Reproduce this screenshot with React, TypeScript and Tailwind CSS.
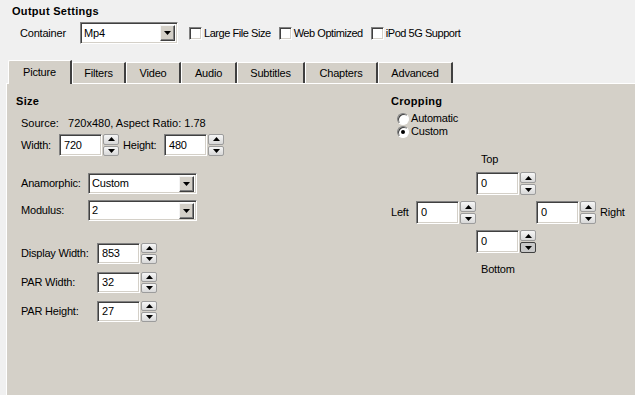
import React from 'react';

const sunken =
    'bg-white border border-t-[#808080] border-l-[#808080] border-b-white border-r-white shadow-[inset_1px_1px_0_#404040,inset_-1px_-1px_0_#d4d0c8]';
const raised =
    'bg-[#d4d0c8] border border-t-[#f4f4f4] border-l-[#f4f4f4] border-r-[#404040] border-b-[#404040] shadow-[inset_-1px_-1px_0_#808080]';

const Arrow: React.FC<{ down?: boolean }> = ({ down }) => (
    <svg width="7" height="4" viewBox="0 0 7 4">
        <path d={down ? 'M0 0h7L3.5 4z' : 'M0 4h7L3.5 0z'} fill="#000" />
    </svg>
);

const Field: React.FC<{ value: string; w?: string; h?: string }> = ({ value, w = 'w-[43px]', h = 'h-[22px]' }) => (
    <div className={`${w} ${h} ${sunken} flex items-center pl-[4px]`}>{value}</div>
);

const Spin: React.FC<{ h?: string; pressed?: boolean }> = ({ h = 'h-[22px]', pressed }) => (
    <div className={`flex flex-col gap-px w-[16px] ${h}`}>
        <div className="flex-1 rounded-[2px] border border-[#9c9c9c] bg-linear-to-b from-[#f6f6f6] to-[#d8d8d8] flex items-center justify-center">
            <Arrow />
        </div>
        <div
            className={`flex-1 rounded-[2px] border flex items-center justify-center ${
                pressed ? 'border-[#404040] bg-[#c8c8c8]' : 'border-[#9c9c9c] bg-linear-to-b from-[#f6f6f6] to-[#d8d8d8]'
            }`}
        >
            <Arrow down />
        </div>
    </div>
);

const SpinField: React.FC<{ value: string; h?: string; pressed?: boolean }> = ({ value, h = 'h-[22px]', pressed }) => (
    <div className="flex gap-px">
        <Field value={value} h={h} />
        <Spin h={h} pressed={pressed} />
    </div>
);

const Combo: React.FC<{ value: string; w: string; h?: string }> = ({ value, w, h = 'h-[22px]' }) => (
    <div className={`${w} ${h} ${sunken} flex items-center pr-[2px]`}>
        <span className="flex-1 pl-[3px]">{value}</span>
        <div className={`w-[15px] h-[16px] ${raised} flex items-center justify-center`}>
            <Arrow down />
        </div>
    </div>
);

const Check: React.FC<{ label: string }> = ({ label }) => (
    <div className="flex items-center gap-[2px]">
        <div className={`w-[13px] h-[13px] ${sunken}`} />
        <span className="tracking-[-0.45px]">{label}</span>
    </div>
);

const Radio: React.FC<{ label: string; checked?: boolean }> = ({ label, checked }) => (
    <div className="flex items-center gap-[2px] h-[13px]">
        <div className="w-[12px] h-[12px] rounded-full bg-white border border-t-[#808080] border-l-[#808080] border-b-white border-r-white shadow-[inset_1px_1px_0_#404040] flex items-center justify-center">
            {checked && <div className="w-[4px] h-[4px] rounded-full bg-black" />}
        </div>
        <span>{label}</span>
    </div>
);

const tabs = ['Picture', 'Filters', 'Video', 'Audio', 'Subtitles', 'Chapters', 'Advanced'];
const tabWidths = ['w-[64px]', 'w-[54px]', 'w-[55px]', 'w-[56px]', 'w-[68px]', 'w-[73px]', 'w-[75px]'];

const App: React.FC = () => {
    return (
        <div className="w-[635px] h-[395px] overflow-hidden bg-[#f0f0f0] text-black text-[11px] leading-[13px] tracking-[-0.2px] font-['Tahoma','Liberation_Sans',sans-serif] flex flex-col">
            <div className="pt-[5px] pl-[12px] font-bold tracking-[0.3px]">Output Settings</div>
            <div className="mt-[4px] pl-[20px] flex items-center h-[22px]">
                <span className="w-[60px]">Container</span>
                <Combo value="Mp4" w="w-[98px]" />
                <div className="ml-[11px] flex items-center gap-[8px]">
                    <Check label="Large File Size" />
                    <Check label="Web Optimized" />
                    <Check label="iPod 5G Support" />
                </div>
            </div>

            <div className="mt-[16px] pl-[8px] flex items-end h-[24px] relative z-10">
                {tabs.map((t, i) =>
                    i === 0 ? (
                        <div
                            key={t}
                            className={`${tabWidths[i]} h-[24px] bg-[#d4d0c8] border-t border-l border-[#ffffff] border-r-2 border-r-[#404040] rounded-tl-[2px] flex items-center justify-center pb-[1px]`}
                        >
                            {t}
                        </div>
                    ) : (
                        <div
                            key={t}
                            className={`${tabWidths[i]} h-[21px] mb-px bg-[#d4d0c8] border-t border-l border-[#ffffff] border-r-2 border-r-[#404040] flex items-center justify-center`}
                        >
                            {t}
                        </div>
                    )
                )}
            </div>

            <div className="flex-1 ml-[6px] -mt-px bg-[#d4d0c8] border-t border-l border-white flex pt-[11px]">
                <div className="w-[384px] pl-[9px] flex flex-col">
                    <div className="font-bold tracking-[0.3px]">Size</div>
                    <div className="mt-[9px] pl-[5px] tracking-normal">Source:&nbsp;&nbsp; 720x480, Aspect Ratio: 1.78</div>
                    <div className="mt-[4px] pl-[5px] flex items-center">
                        <span className="w-[38px]">Width:</span>
                        <SpinField value="720" />
                        <span className="ml-[4px] w-[41px]">Height:</span>
                        <SpinField value="480" />
                    </div>
                    <div className="mt-[17px] pl-[5px] flex items-center">
                        <span className="w-[67px]">Anamorphic:</span>
                        <Combo value="Custom" w="w-[109px]" h="h-[21px]" />
                    </div>
                    <div className="mt-[6px] pl-[5px] flex items-center">
                        <span className="w-[67px]">Modulus:</span>
                        <Combo value="2" w="w-[109px]" h="h-[21px]" />
                    </div>
                    <div className="mt-[22px] pl-[5px] flex flex-col gap-[8px]">
                        {[
                            ['Display Width:', '853'],
                            ['PAR Width:', '32'],
                            ['PAR Height:', '27'],
                        ].map(([l, v]) => (
                            <div key={l} className="flex items-center">
                                <span className="w-[76px]">{l}</span>
                                <SpinField value={v} h="h-[21px]" />
                            </div>
                        ))}
                    </div>
                </div>

                <div className="flex flex-col">
                    <div className="font-bold tracking-[0.3px]">Cropping</div>
                    <div className="mt-[4px] pl-[6px] flex flex-col">
                        <Radio label="Automatic" />
                        <Radio label="Custom" checked />
                    </div>
                    <div className="mt-[15px] grid grid-cols-[85px_60px_auto] items-center">
                        <div />
                        <div className="pl-[5px]">Top</div>
                        <div />
                        <div />
                        <div className="mt-[6px]">
                            <SpinField value="0" h="h-[23px]" />
                        </div>
                        <div />
                        <div className="mt-[6px] flex items-center">
                            <span className="w-[25px]">Left</span>
                            <SpinField value="0" h="h-[23px]" />
                        </div>
                        <div />
                        <div className="mt-[6px] flex items-center">
                            <SpinField value="0" h="h-[23px]" />
                            <span className="ml-[4px]">Right</span>
                        </div>
                        <div />
                        <div className="mt-[6px]">
                            <SpinField value="0" h="h-[23px]" pressed />
                        </div>
                        <div />
                        <div />
                        <div className="mt-[10px] pl-[5px]">Bottom</div>
                        <div />
                    </div>
                </div>
            </div>
        </div>
    );
};

export default App;
